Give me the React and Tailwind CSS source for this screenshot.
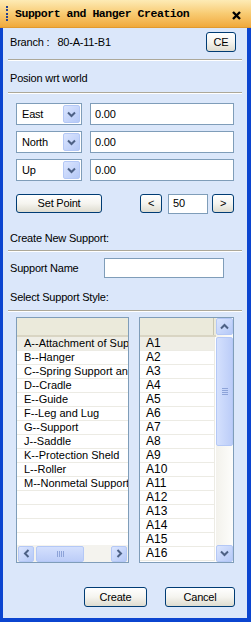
import React from "react";

const F = { fontFamily: '"Liberation Sans", Arial, sans-serif' };
const T = "text-[11px] tracking-[-0.2px]";

function Btn({ children, className = "" }) {
  return (
    <div
      className={
        "flex items-center justify-center rounded-[3px] border border-[#003c74] bg-gradient-to-b from-white via-[#f5f4ef] to-[#dedcd0] text-[11px] tracking-[-0.2px] leading-none text-black " +
        className
      }
    >
      {children}
    </div>
  );
}

function Chevron({ dir = "down", color = "#4d6185" }) {
  const rot = { down: 0, up: 180, left: 90, right: -90 }[dir];
  return (
    <svg width="9" height="7" viewBox="0 0 9 7" style={{ transform: `rotate(${rot}deg)` }}>
      <path d="M1 1.5 L4.5 5 L8 1.5" fill="none" stroke={color} strokeWidth="2" />
    </svg>
  );
}

function SBtn({ dir, className = "" }) {
  return (
    <div
      className={
        "flex items-center justify-center rounded-[2px] border border-[#b4c8f6] bg-gradient-to-br from-[#dbe5fe] to-[#b5c9f7] " +
        className
      }
    >
      <Chevron dir={dir} />
    </div>
  );
}

function Combo({ label }) {
  return (
    <div className="flex h-[22px] w-[66px] items-center border border-[#7f9db9] bg-white p-px">
      <div className={"flex-1 pl-[4px] leading-none " + T}>{label}</div>
      <SBtn dir="down" className="h-[18px] w-[17px]" />
    </div>
  );
}

function TextBox({ value = "", className = "" }) {
  return (
    <div className={"flex items-center border border-[#7f9db9] bg-white pl-[4px] leading-none " + T + " " + className}>
      {value}
    </div>
  );
}

function Sep() {
  return <div className="mx-[5px] h-[2px] border-t border-[#aca899] border-b border-b-white" />;
}

const styles = [
  "A--Attachment of Support",
  "B--Hanger",
  "C--Spring Support and Hanger",
  "D--Cradle",
  "E--Guide",
  "F--Leg and Lug",
  "G--Support",
  "J--Saddle",
  "K--Protection Sheld",
  "L--Roller",
  "M--Nonmetal Support",
  "",
  "",
  "",
  "",
];

const codes = Array.from({ length: 16 }, (_, i) => "A" + (i + 1));

export default function App() {
  return (
    <div className="flex h-[622px] w-[251px] flex-col overflow-hidden bg-[#dbe7fa]" style={F}>
      {/* Title bar */}
      <div className="relative flex h-[28px] shrink-0 items-center border-b border-[#e09a30] bg-gradient-to-b from-[#fdebb5] via-[#f8cb72] to-[#f0a93a]">
        <div className="ml-[6px] flex h-[15px] w-[3px] flex-col justify-between">
          {[0, 1, 2, 3, 4].map((i) => (
            <div key={i} className="h-[2px] w-[2px] bg-[#26418e]" />
          ))}
        </div>
        <div
          className="ml-[6px] text-[11.5px] font-bold leading-none tracking-[-0.45px] text-black"
          style={{ fontFamily: '"Liberation Mono", "Courier New", monospace' }}
        >
          Support and Hanger Creation
        </div>
        <svg className="absolute left-[232px] top-[11px]" width="9" height="9" viewBox="0 0 9 9">
          <path d="M1 1 L8 8 M8 1 L1 8" stroke="#000" strokeWidth="2.4" />
        </svg>
      </div>

      {/* Body */}
      <div className="flex flex-1 flex-col border-x-[3px] border-b-[4px] border-r-[4px] border-[#0b45d0]">
        {/* Branch */}
        <div className="mt-[4px] flex h-[20px] shrink-0 items-center">
          <div className={"ml-[7px] leading-none " + T}>Branch :</div>
          <div className={"ml-[8px] leading-none " + T}>80-A-11-B1</div>
          <Btn className="ml-auto mr-[11px] h-[20px] w-[30px]">CE</Btn>
        </div>
        <div className="mt-[7px]">
          <Sep />
        </div>
        <div className={"ml-[7px] mt-[10px] h-[14px] leading-[14px] " + T}>Posion wrt world</div>
        <div className="mt-[7px]">
          <Sep />
        </div>

        {/* Direction rows */}
        <div className="ml-[13px] mt-[9px] flex flex-col gap-[6px]">
          {["East", "North", "Up"].map((d) => (
            <div key={d} className="flex items-center gap-[8px]">
              <Combo label={d} />
              <TextBox value="0.00" className="h-[22px] w-[144px]" />
            </div>
          ))}
        </div>

        {/* Set point row */}
        <div className="ml-[13px] mt-[13px] flex h-[19px] items-center">
          <Btn className="h-[19px] w-[86px]">Set Point</Btn>
          <Btn className="ml-[38px] h-[19px] w-[22px]">&lt;</Btn>
          <TextBox value="50" className="ml-[6px] h-[20px] w-[40px]" />
          <Btn className="ml-[4px] h-[19px] w-[22px]">&gt;</Btn>
        </div>

        <div className={"ml-[7px] mt-[18px] h-[14px] leading-[14px] " + T}>Create New Support:</div>
        <div className="mt-[5px]">
          <Sep />
        </div>
        <div className="mt-[6px] flex h-[20px] items-center">
          <div className={"ml-[7px] w-[94px] leading-none " + T}>Support Name</div>
          <TextBox className="h-[20px] w-[120px]" />
        </div>
        <div className={"ml-[7px] mt-[12px] h-[14px] leading-[14px] " + T}>Select Support Style:</div>
        <div className="mt-[6px]">
          <Sep />
        </div>

        {/* Lists */}
        <div className="ml-[13px] mt-[5px] flex gap-[10px]">
          {/* Left list */}
          <div className="flex h-[246px] w-[113px] flex-col overflow-hidden border border-[#7f9db9] bg-white">
            <div className="h-[19px] shrink-0 border-b-[2px] border-[#d9d5c3] bg-[#ebeadb]" />
            <div className="flex-1 overflow-hidden">
              {styles.map((s, i) => (
                <div
                  key={i}
                  className={
                    "h-[14px] whitespace-nowrap border-b border-[#ecebe4] pl-[7px] text-[11px] leading-[13px] " +
                    (i === 0 ? "bg-[#efeee6]" : "")
                  }
                >
                  {s}
                </div>
              ))}
            </div>
            <div className="flex h-[17px] shrink-0 items-center bg-[#f4f3ee] px-px">
              <SBtn dir="left" className="h-[16px] w-[16px]" />
              <div className="ml-[2px] flex h-[16px] w-[48px] items-center justify-center rounded-[2px] border border-[#b4c8f6] bg-gradient-to-b from-[#d4e0fd] to-[#bccdf8]">
                <div className="flex gap-[1px]">
                  {[0, 1, 2, 3].map((i) => (
                    <div key={i} className="h-[6px] w-px bg-[#8da3d8]" />
                  ))}
                </div>
              </div>
              <SBtn dir="right" className="ml-auto h-[16px] w-[16px]" />
            </div>
          </div>

          {/* Right list */}
          <div className="flex h-[246px] w-[95px] overflow-hidden border border-[#7f9db9] bg-white">
            <div className="flex flex-1 flex-col overflow-hidden">
              <div className="flex h-[19px] shrink-0 border-b-[2px] border-[#d9d5c3] bg-[#ebeadb]">
                <div className="w-[74px] border-r border-[#c7c5b2]" />
              </div>
              {codes.map((c, i) => (
                <div
                  key={c}
                  className={
                    "h-[14px] w-[75px] shrink-0 border-b border-r border-[#ecebe4] pl-[6px] text-[12px] leading-[13px] " +
                    (i === 0 ? "bg-[#efeee6]" : "")
                  }
                >
                  {c}
                </div>
              ))}
            </div>
            <div className="flex w-[17px] flex-col bg-gradient-to-r from-[#f3f2ec] to-[#fdfdfb]">
              <SBtn dir="up" className="h-[17px] w-[17px]" />
              <div className="mt-[2px] flex h-[109px] w-[17px] items-center justify-center rounded-[2px] border border-[#b4c8f6] bg-gradient-to-r from-[#d4e0fd] to-[#bccdf8]">
                <div className="flex flex-col gap-[1px]">
                  {[0, 1, 2, 3].map((i) => (
                    <div key={i} className="h-px w-[6px] bg-[#8da3d8]" />
                  ))}
                </div>
              </div>
              <SBtn dir="down" className="mt-auto h-[17px] w-[17px]" />
            </div>
          </div>
        </div>

        {/* Bottom buttons */}
        <div className="mt-[24px] flex">
          <Btn className="ml-[81px] h-[20px] w-[63px]">Create</Btn>
          <Btn className="ml-[18px] h-[20px] w-[70px]">Cancel</Btn>
        </div>
      </div>
    </div>
  );
}
